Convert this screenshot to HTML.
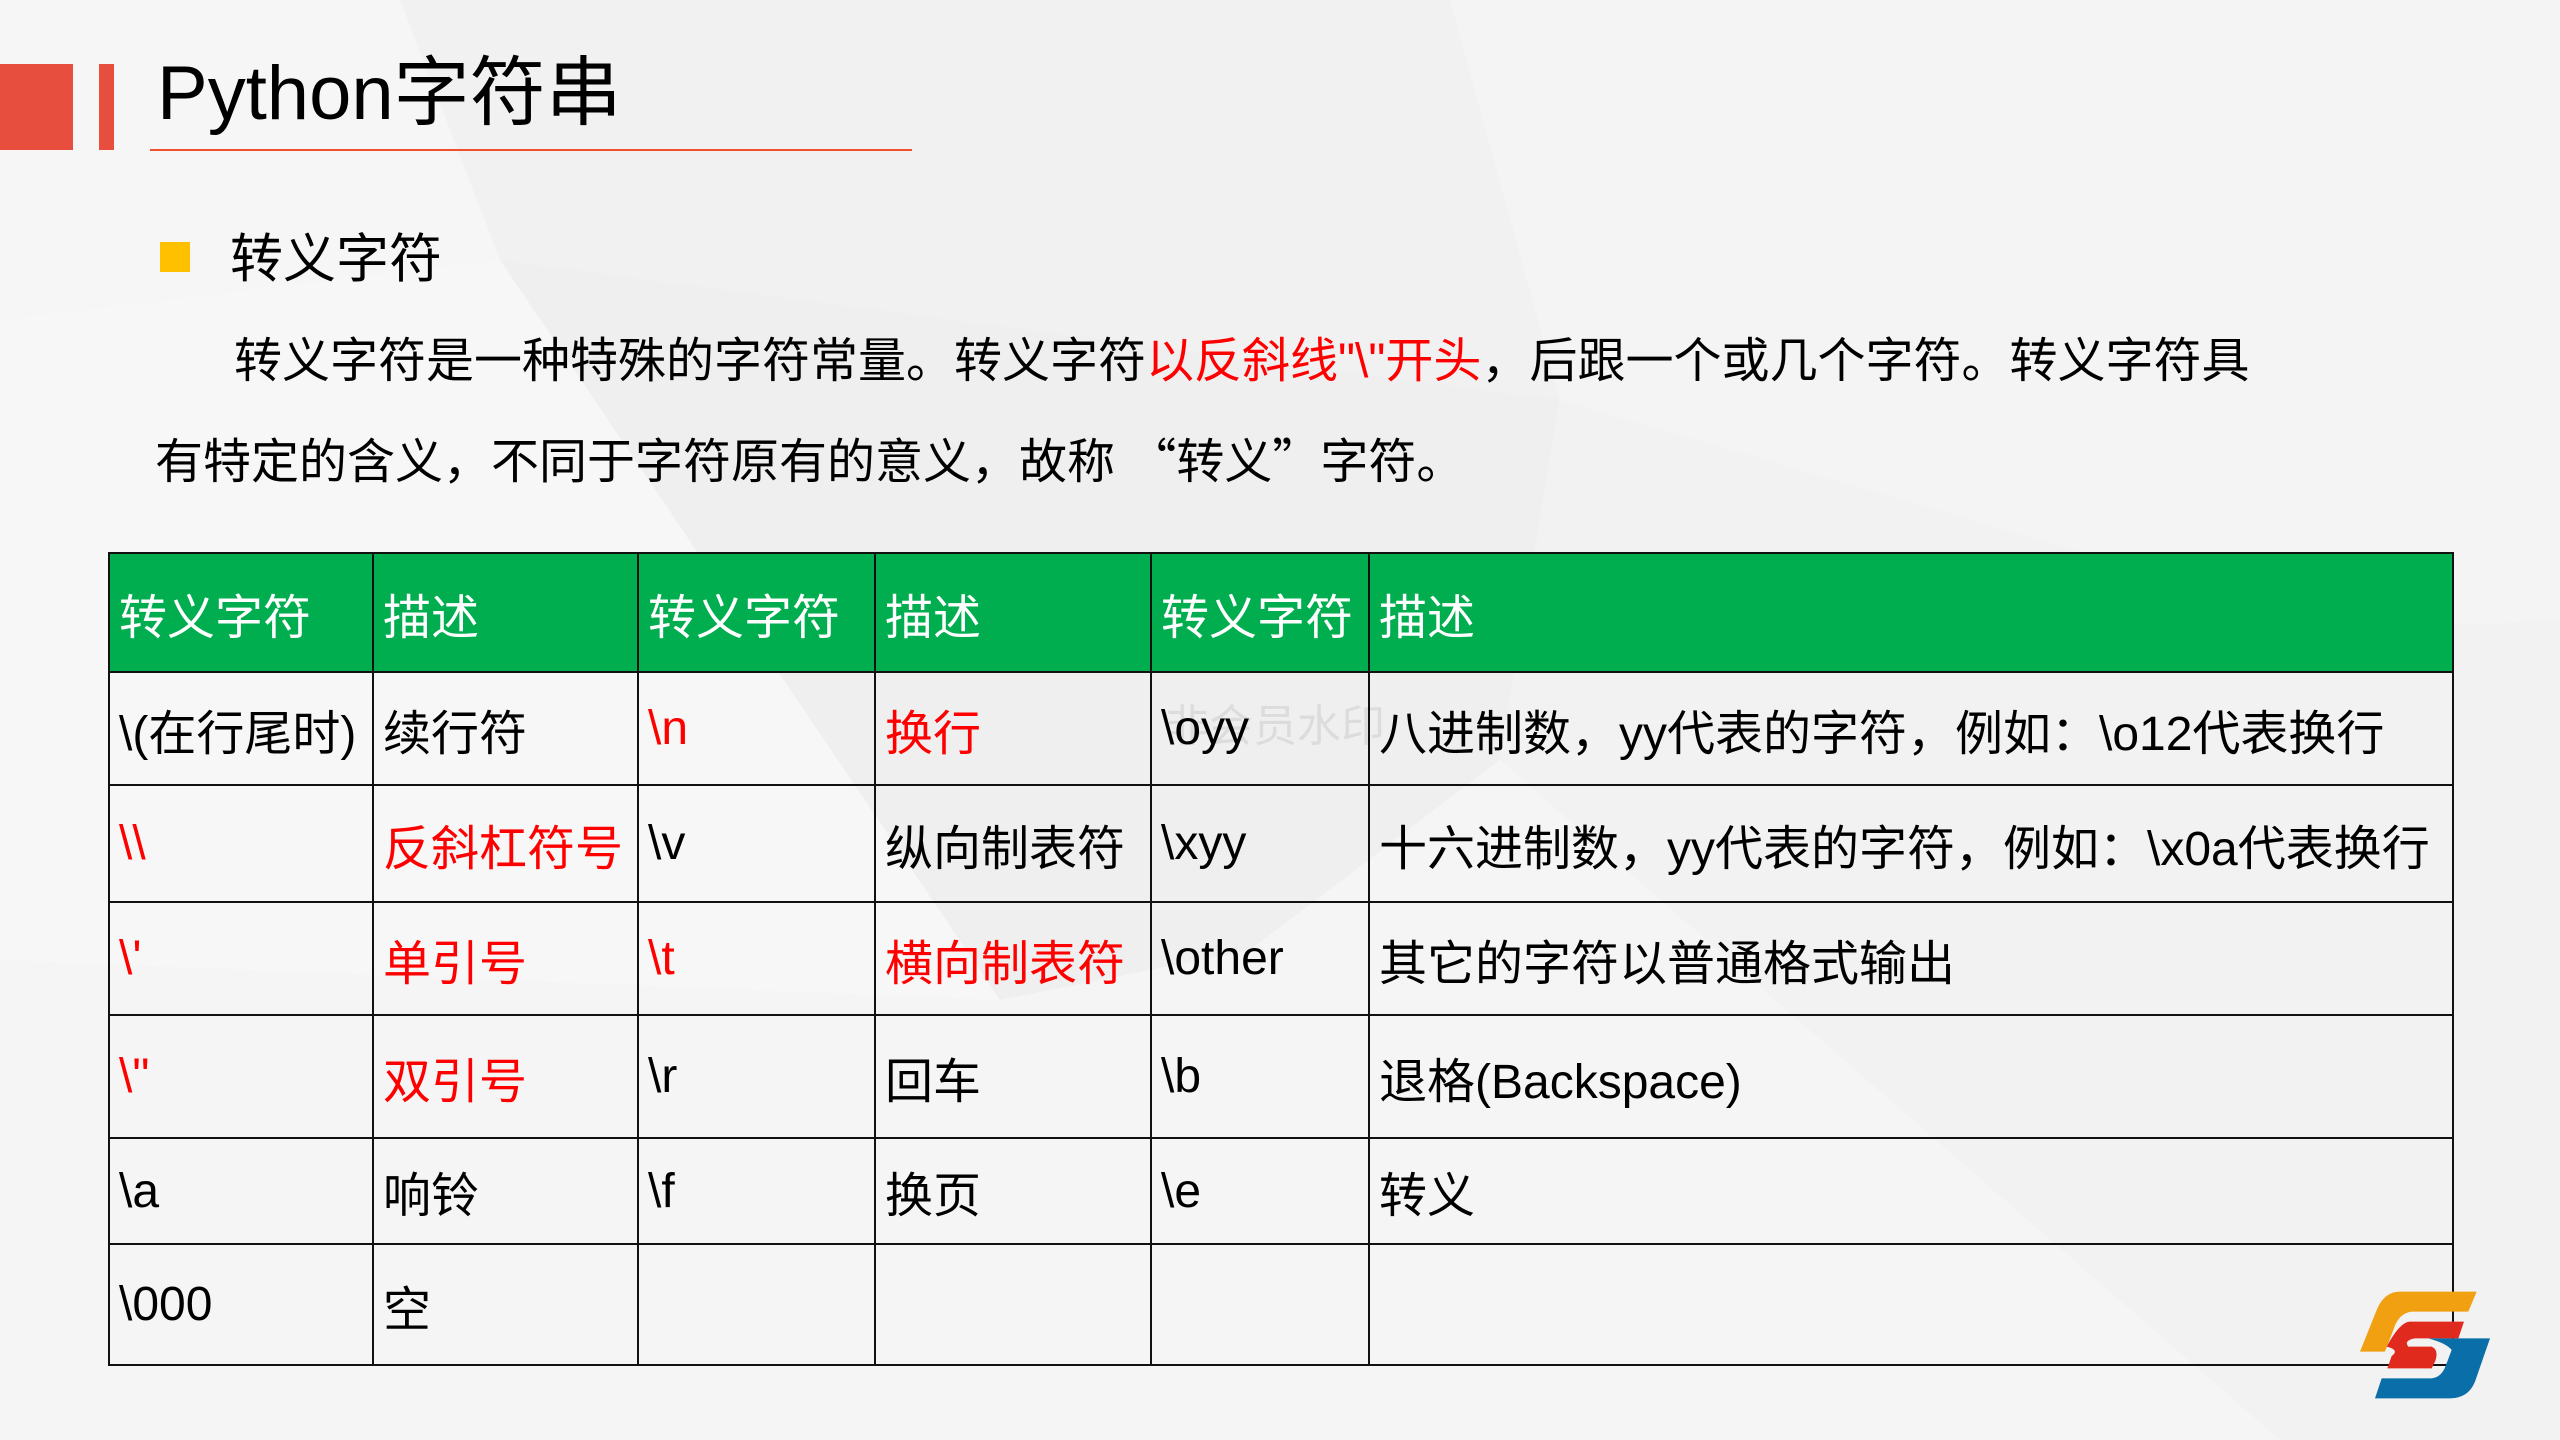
<!DOCTYPE html>
<html><head><meta charset="utf-8"><style>
*{margin:0;padding:0;box-sizing:border-box}
body{width:2560px;height:1440px;overflow:hidden;background:#f3f3f3;font-family:"Liberation Sans","Noto Sans CJK SC",sans-serif;position:relative;color:#000}
.abs{position:absolute}
table{position:absolute;left:108px;top:552px;border-collapse:collapse;table-layout:fixed}
td{border:2px solid #111;font-size:48px;padding:0 0 0 9px;white-space:nowrap;vertical-align:middle;overflow:hidden}
tr.h td{background:#00ae4f;color:#fff}
.r{color:#ff0000}
.c{font-family:"Noto Sans CJK SC",sans-serif}
</style></head><body>
<svg class="abs" style="left:0;top:0" width="2560" height="1440">
<polygon points="0,0 400,0 500,260 0,320" fill="#f6f6f6"/>
<polygon points="400,0 1450,0 1560,400 500,260" fill="#f1f1f1"/>
<polygon points="1450,0 2560,0 2560,620 2350,630 1560,400" fill="#f4f4f4"/>
<polygon points="0,320 500,260 1000,1000 0,960" fill="#f7f7f7"/>
<polygon points="500,260 1560,400 1500,760 1250,950 1000,1000" fill="#efefef"/>
<polygon points="1560,400 2350,630 2560,620 2560,1440 2280,1440 1500,760" fill="#f2f2f2"/>
<polygon points="0,960 1000,1000 1250,950 1500,760 2280,1440 0,1440" fill="#f5f5f5"/>
</svg>
<div class="abs" style="left:0;top:64px;width:73px;height:86px;background:#e84e3e"></div>
<div class="abs" style="left:99px;top:64px;width:15px;height:86px;background:#e84e3e"></div>
<div class="abs" style="left:157px;top:44px;font-size:76px;line-height:100px;white-space:nowrap">Python字符串</div>
<div class="abs" style="left:150px;top:149px;width:762px;height:2px;background:#f0502c"></div>
<div class="abs" style="left:160px;top:242px;width:30px;height:30px;background:#ffc000"></div>
<div class="abs" style="left:230px;top:225px;font-size:53px;line-height:70px;white-space:nowrap">转义字符</div>
<div class="abs" style="left:234px;top:332px;font-size:48px;line-height:60px;white-space:nowrap">转义字符是一种特殊的字符常量。转义字符<span class="r">以反斜线"\"开头</span>，后跟一个或几个字符。转义字符具</div>
<div class="abs" style="left:155px;top:427px;font-size:48px;line-height:60px;white-space:nowrap">有特定的含义，不同于字符原有的意义，故称 <span class="c">“转义”</span>字符。</div>
<table>
<colgroup><col style="width:264px"><col style="width:265px"><col style="width:237px"><col style="width:276px"><col style="width:218px"><col style="width:1084px"></colgroup>
<tr class="h" style="height:119px"><td>转义字符</td><td>描述</td><td>转义字符</td><td>描述</td><td>转义字符</td><td>描述</td></tr>
<tr style="height:113px"><td>\(在行尾时)</td><td>续行符</td><td class="r">\n</td><td class="r">换行</td><td>\oyy</td><td>八进制数，yy代表的字符，例如：\o12代表换行</td></tr>
<tr style="height:117px"><td class="r">\\</td><td class="r">反斜杠符号</td><td>\v</td><td>纵向制表符</td><td>\xyy</td><td>十六进制数，yy代表的字符，例如：\x0a代表换行</td></tr>
<tr style="height:113px"><td class="r">\'</td><td class="r">单引号</td><td class="r">\t</td><td class="r">横向制表符</td><td>\other</td><td>其它的字符以普通格式输出</td></tr>
<tr style="height:123px"><td class="r">\"</td><td class="r">双引号</td><td>\r</td><td>回车</td><td>\b</td><td>退格(Backspace)</td></tr>
<tr style="height:106px"><td>\a</td><td>响铃</td><td>\f</td><td>换页</td><td>\e</td><td>转义</td></tr>
<tr style="height:121px"><td>\000</td><td>空</td><td></td><td></td><td></td><td></td></tr>
</table>
<div class="abs" style="left:1165px;top:690px;font-size:44px;color:rgba(0,0,0,0.08);white-space:nowrap">非会员水印</div>
<svg class="abs" style="left:2300px;top:1250px" width="260" height="190" viewBox="0 0 780 570">
<path d="M300,125 L530,125 L505,185 L335,185 Q295,190 280,240 L255,305 L180,305 L232,175 Q255,125 300,125 Z" fill="#f0a010"/>
<path d="M330,215 L492,215 L475,265 L345,265 Q310,272 325,290 L395,290 Q418,300 405,335 L395,355 L262,355 L275,318 Q300,300 260,290 Q300,215 330,215 Z" fill="#e02a1e"/>
<path d="M385,265 L570,265 L525,395 Q505,445 450,445 L225,445 L245,385 L395,385 Q425,382 438,345 L455,300 Q440,280 385,265 Z" fill="#0a6ea8"/>
</svg>
</body></html>
